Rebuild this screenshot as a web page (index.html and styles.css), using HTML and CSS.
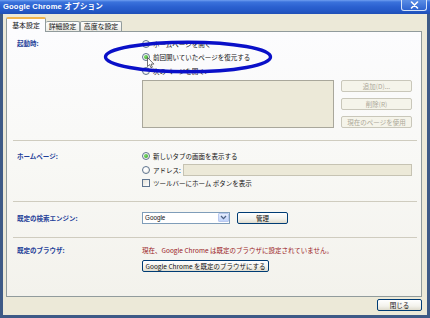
FILE: index.html
```html
<!DOCTYPE html>
<html lang="ja">
<head>
<meta charset="utf-8">
<link rel="stylesheet" href="styles.css">
</head>
<body>
<div class="window">
  <div class="titlebar">
    <span class="title">Google Chrome オプション</span>
    <span class="closebtn"><svg width="9" height="8" viewBox="0 0 9 8"><path d="M1.5 1 L7.5 7 M7.5 1 L1.5 7" stroke="#fff" stroke-width="1.6" stroke-linecap="round"/></svg></span>
  </div>
  <div class="client">
    <div class="tabs">
      <div class="tab active">基本設定</div>
      <div class="tab t2">詳細設定</div>
      <div class="tab t3">高度な設定</div>
    </div>
    <div class="panel">
      <section class="sec sec1">
        <div class="label">起動時:</div>
        <div class="content">
          <div class="row"><span class="radio"></span>ホームページを開く</div>
          <div class="row"><span class="radio on"></span>前回開いていたページを復元する</div>
          <div class="row"><span class="radio"></span>次のページを開く:</div>
          <div class="listarea">
            <div class="listbox"></div>
            <div class="btncol">
              <div class="btn dis">追加(D)...</div>
              <div class="btn dis">削除(R)</div>
              <div class="btn dis">現在のページを使用</div>
            </div>
          </div>
        </div>
      </section>
      <section class="sec sec2">
        <div class="label">ホームページ:</div>
        <div class="content">
          <div class="row"><span class="radio on"></span>新しいタブの画面を表示する</div>
          <div class="row"><span class="radio"></span>アドレス:<span class="addr"></span></div>
          <div class="row"><span class="check"></span>ツールバーにホーム ボタンを表示</div>
        </div>
      </section>
      <section class="sec sec3">
        <div class="label lbl3">既定の検索エンジン:</div>
        <div class="content hrow">
          <div class="select"><span class="selval">Google</span><span class="selarrow"><svg width="7" height="5" viewBox="0 0 7 5"><path d="M1 1 L3.5 3.6 L6 1" fill="none" stroke="#4d6185" stroke-width="1.3"/></svg></span></div>
          <div class="btn manage">管理</div>
        </div>
      </section>
      <section class="sec sec4">
        <div class="label">既定のブラウザ:</div>
        <div class="content">
          <div class="row warn">現在、Google Chrome は既定のブラウザに設定されていません。</div>
          <div class="btn setdef">Google Chrome を既定のブラウザにする</div>
        </div>
      </section>
    </div>
    <div class="footer">
      <div class="btn closeb">閉じる</div>
    </div>
  </div>
  <svg class="ellipse" width="170" height="34" viewBox="0 0 170 34"><ellipse cx="85" cy="17" rx="82.5" ry="14.8" fill="none" stroke="#0a10c8" stroke-width="3.4"/></svg>
  <svg class="cursor" width="8" height="12" viewBox="0 0 8 12"><path d="M0.5 0.5 L0.5 9.5 L2.6 7.6 L4 10.8 L5.4 10.2 L4 7.1 L6.9 7.1 Z" fill="#fff" stroke="#333" stroke-width="0.7"/></svg>
</div>
</body>
</html>
```

FILE: styles.css
```css
* { box-sizing: border-box; margin: 0; padding: 0; }
html, body { margin: 0; width: 430px; height: 318px; overflow: hidden; }
body {
  font-family: "Noto Sans CJK JP", "Liberation Sans", sans-serif;
  font-size: 6.5px;
  color: #111;
}
.window {
  position: relative;
  width: 430px;
  height: 318px;
  display: flex;
  flex-direction: column;
  background: #3e5a86;
}
.titlebar {
  height: 14px;
  flex: none;
  display: flex;
  justify-content: space-between;
  align-items: flex-start;
  padding: 0 3px 0 3px;
  background: linear-gradient(#6f9ff0 0, #3a72dc 2px, #2a60cf 7px, #2458c6 11px, #1f4fb6 14px);
}
.title {
  color: #fff;
  font-weight: bold;
  font-size: 7.6px;
  line-height: 14px;
  font-family: "Liberation Sans", "Noto Sans CJK JP", sans-serif;
  letter-spacing: 0.15px;
}
.closebtn {
  width: 26px;
  height: 11px;
  margin-right: 0;
  border: 1px solid #d8e4f8;
  border-top: none;
  border-radius: 0 0 3px 3px;
  background: linear-gradient(#5b8ee6, #2e63cf);
  display: flex;
  align-items: center;
  justify-content: center;
}
.client {
  flex: 1;
  margin: 0 3px 3px 3px;
  background: #ece9d8;
  padding: 3px 5px 0 3px;
  display: flex;
  flex-direction: column;
}
.tabs {
  height: 14px;
  flex: none;
  display: flex;
  align-items: flex-end;
  position: relative;
  z-index: 2;
}
.tab {
  height: 10px;
  border: 1px solid #919b9c;
  border-bottom: none;
  border-radius: 2px 2px 0 0;
  background: linear-gradient(#fefefe, #ecebe5);
  font-size: 6.9px;
  line-height: 9px;
  text-align: center;
}
.tab.active {
  width: 40px;
  height: 15px;
  margin-bottom: -1px;
  background: #fcfcfe;
  border-top: 2px solid #f2b54c;
  line-height: 12px;
}
.tab.t2 { width: 34px; border-left: none; }
.tab.t3 { width: 42px; border-left: 1px solid #919b9c; }
.panel {
  height: 266px;
  flex: none;
  border: 1px solid #919b9c;
  background: linear-gradient(#fcfcfe 0%, #f8f8f5 50%, #f3f2ec 100%);
  display: flex;
  flex-direction: column;
}
.sec {
  margin: 0 4px 0 6px;
  padding: 0 5px 0 4px;
  display: grid;
  grid-template-columns: 125px 1fr;
  align-items: start;
}
.sec + .sec { border-top: 1px solid #cfccbf; }
.sec1 { padding-top: 5px; padding-bottom: 12px; }
.sec2 { padding-top: 8.5px; padding-bottom: 10.5px; }
.sec3 { padding-top: 10px; padding-bottom: 13px; }
.sec4 { padding-top: 6px; }
.label {
  color: #1f3f99;
  font-weight: bold;
  line-height: 13.5px;
}
.lbl3 { line-height: 12px; }
.content { display: flex; flex-direction: column; }
.hrow { flex-direction: row; align-items: center; }
.row {
  height: 13.5px;
  display: flex;
  align-items: center;
  white-space: nowrap;
}
.radio {
  width: 8px;
  height: 8px;
  border-radius: 50%;
  border: 1px solid #5f7590;
  background: radial-gradient(circle at 40% 40%, #ffffff 30%, #e2dfd4 100%);
  margin-right: 3px;
  flex: none;
  display: flex;
  align-items: center;
  justify-content: center;
}
.radio.on::after {
  content: "";
  width: 4px;
  height: 4px;
  border-radius: 50%;
  background: radial-gradient(circle at 35% 35%, #7fdc6c, #2a9b22);
}
.check {
  width: 8px;
  height: 8px;
  border: 1px solid #5f7590;
  background: linear-gradient(135deg, #e4e2d8, #ffffff);
  margin-right: 3px;
  flex: none;
}
.addr {
  width: 229px;
  height: 12px;
  margin-left: auto;
  background: #ece9d8;
  border: 1px solid #c6c3b3;
}
.listarea {
  margin-top: 2.5px;
  display: flex;
  gap: 7px;
}
.listbox {
  width: 192px;
  height: 48px;
  background: #ece9d8;
  border: 1px solid #a9a79b;
}
.btncol {
  display: flex;
  flex-direction: column;
  gap: 6px;
}
.btn {
  height: 12px;
  border: 1px solid #003c74;
  border-radius: 2px;
  background: linear-gradient(#ffffff, #f3f2ec 60%, #dedbcd);
  display: flex;
  align-items: center;
  justify-content: center;
  white-space: nowrap;
  font-size: 6.5px;
  color: #111;
}
.btncol .btn { width: 71px; }
.btn.dis {
  border-color: #c9c7ba;
  background: #f5f4ea;
  color: #aca899;
}
.select {
  width: 88px;
  height: 12px;
  border: 1px solid #7f9db9;
  background: #fff;
  display: flex;
  align-items: stretch;
}
.selval {
  flex: 1;
  padding-left: 2px;
  line-height: 10px;
  font-family: "Liberation Sans", "Noto Sans CJK JP", sans-serif;
  font-size: 6.3px;
}
.selarrow {
  width: 11px;
  margin: 0.5px;
  border: 1px solid #b9c9ef;
  border-radius: 1px;
  background: linear-gradient(#e6eefc, #c1d3fb);
  display: flex;
  align-items: center;
  justify-content: center;
}
.manage { width: 51px; margin-left: 7px; }
.warn { color: #9a1a1e; }
.setdef { width: 127px; margin-top: 3px; }
.footer {
  flex: 1;
  display: flex;
  justify-content: flex-end;
  align-items: flex-start;
  padding-top: 2px;
}
.closeb { width: 45px; }
.ellipse { position: absolute; left: 103px; top: 40px; }
.cursor { position: absolute; left: 147px; top: 57px; }
```
